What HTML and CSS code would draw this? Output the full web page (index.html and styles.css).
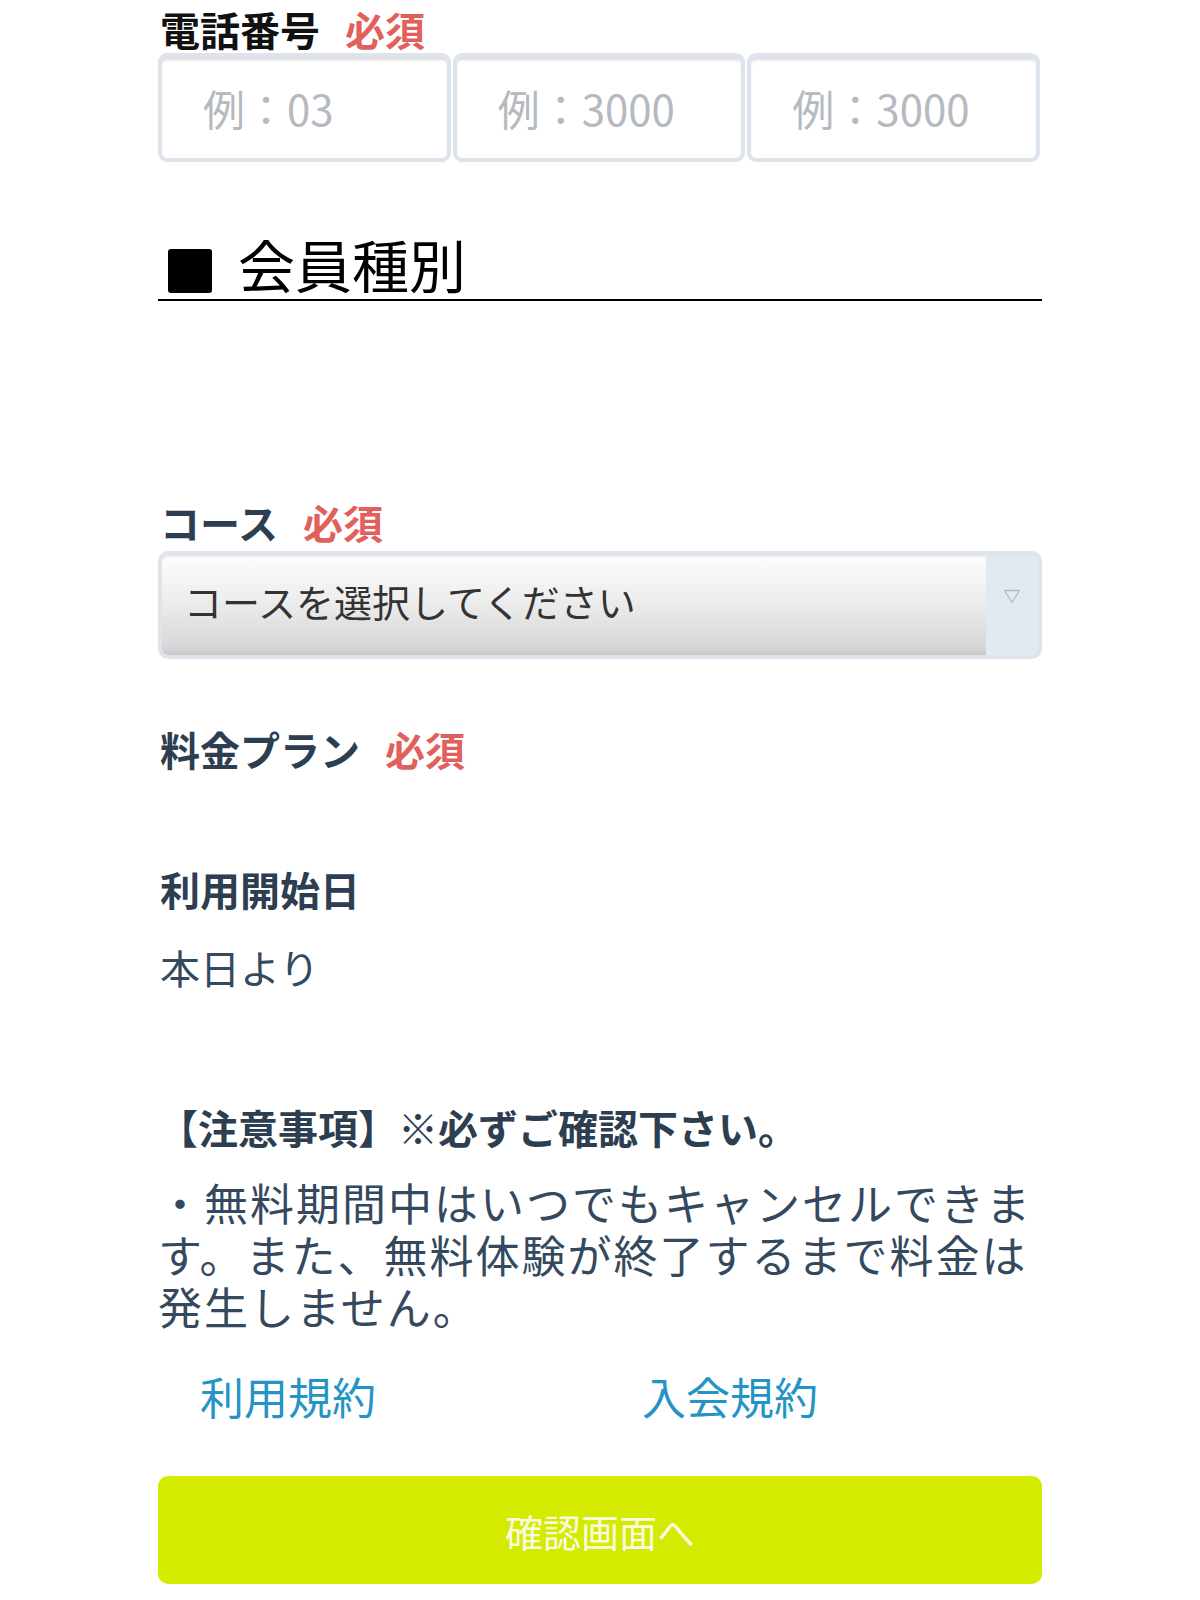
FILE: index.html
```html
<!DOCTYPE html>
<html lang="ja">
<head>
<meta charset="utf-8">
<title>会員登録</title>
<link rel="stylesheet" href="styles.css">
</head>
<body>
<main class="form">
  <div class="label label-black">電話番号<span class="req">必須</span></div>
  <div class="tel-row">
    <input class="tel-input" type="tel" placeholder="例：03">
    <input class="tel-input" type="tel" placeholder="例：3000">
    <input class="tel-input" type="tel" placeholder="例：3000">
  </div>

  <h2 class="section-title"><span class="square"></span><span class="section-text">会員種別</span></h2>

  <div class="label label-course">コース<span class="req">必須</span></div>
  <div class="select-wrap">
    <select class="select">
      <option>コースを選択してください</option>
    </select>
    <span class="select-arrow">
      <svg width="18" height="15" viewBox="0 0 18 15"><path d="M1.5 1.5 L9 13.5 L16.5 1.5 Z" fill="none" stroke="#b7bbc1" stroke-width="1.3" stroke-linejoin="round"/></svg>
    </span>
  </div>

  <div class="label label-plan">料金プラン<span class="req">必須</span></div>

  <div class="label label-start">利用開始日</div>
  <div class="value">本日より</div>

  <div class="label label-notice">【注意事項】※必ずご確認下さい。</div>
  <p class="notice">・無料期間中はいつでもキャンセルできます。また、無料体験が終了するまで料金は発生しません。</p>

  <div class="links">
    <a class="link" href="#">利用規約</a>
    <a class="link" href="#">入会規約</a>
  </div>

  <button class="submit" type="button">確認画面へ</button>
</main>
</body>
</html>
```

FILE: styles.css
```css
html, body {
  margin: 0;
  padding: 0;
  background: #ffffff;
}

body {
  font-family: "Noto Sans CJK JP", "Noto Sans", sans-serif;
  color: #2c3e50;
}

.form {
  width: 884px;
  margin-left: 158px;
  padding-top: 5px;
}

.label {
  font-size: 40px;
  line-height: 48px;
  font-weight: 700;
  color: #2c3e50;
  padding-left: 2px;
}

.label-black {
  color: #111111;
}

.req {
  color: #e2605c;
  margin-left: 25px;
}

.tel-row {
  margin-top: 0;
  display: grid;
  grid-template-columns: repeat(3, 1fr);
  gap: 2px;
  width: 882px;
}

.tel-input {
  box-sizing: border-box;
  height: 109px;
  width: 100%;
  border: 4px solid #dde4ed;
  border-radius: 9px;
  background: #ffffff;
  box-shadow: inset 0 4px 3px -1px rgba(0, 0, 0, 0.14);
  padding: 0 0 0 41px;
  font-family: "Noto Sans CJK JP", "Noto Sans", sans-serif;
  font-size: 42px;
  color: #333333;
  outline: none;
}

.tel-input::placeholder {
  color: #b5b9c0;
}

.section-title {
  margin: 71px 0 0 0;
  display: flex;
  align-items: flex-end;
  gap: 26px;
  padding: 0 0 6px 10px;
  border-bottom: 2px solid #000000;
  font-weight: 400;
  color: #000000;
}

.square {
  width: 44px;
  height: 44px;
  background: #000000;
  border-radius: 3px;
  flex: none;
}

.section-text {
  font-size: 57px;
  line-height: 60px;
}

.label-course {
  margin-top: 197px;
}

.select-wrap {
  margin-top: 5px;
  box-sizing: border-box;
  height: 108px;
  border: 4px solid #dde4ed;
  border-radius: 10px;
  background: #e3e9f1;
  display: flex;
  overflow: hidden;
}

.select {
  flex: 1;
  appearance: none;
  -webkit-appearance: none;
  border: none;
  border-radius: 6px 0 0 6px;
  margin: 0;
  padding: 0 0 10px 22px;
  background: linear-gradient(to bottom, #fdfdfd 0%, #ededed 45%, #d7d7d7 92%, #c9c9c9 100%);
  box-shadow: inset 0 3px 2px -1px rgba(0, 0, 0, 0.08);
  font-family: "Noto Sans CJK JP", "Noto Sans", sans-serif;
  font-size: 38px;
  color: #333333;
  outline: none;
}

.select-arrow {
  width: 52px;
  flex: none;
  display: flex;
  justify-content: center;
  align-items: flex-start;
  padding-top: 34px;
  box-sizing: border-box;
}

.label-plan {
  margin-top: 66px;
}

.label-start {
  margin-top: 92px;
}

.value {
  margin-top: 30px;
  font-size: 40px;
  line-height: 48px;
  color: #34495e;
  padding-left: 2px;
}

.label-notice {
  margin-top: 112px;
  padding-left: 0;
}

.notice {
  margin: 25px 0 0 0;
  font-size: 44px;
  line-height: 52px;
  letter-spacing: 2px;
  color: #34495e;
  width: 884px;
}

.links {
  margin-top: 38px;
  display: grid;
  grid-template-columns: 1fr 1fr;
}

.link {
  padding-left: 42px;
  font-size: 44px;
  line-height: 52px;
  color: #2394c4;
  text-decoration: none;
}

.submit {
  display: block;
  margin-top: 54px;
  width: 884px;
  height: 108px;
  border: none;
  border-radius: 10px;
  background: #d4ea00;
  color: #f7fbe0;
  font-family: "Noto Sans CJK JP", "Noto Sans", sans-serif;
  font-size: 38px;
  padding: 0;
  cursor: pointer;
}
```
